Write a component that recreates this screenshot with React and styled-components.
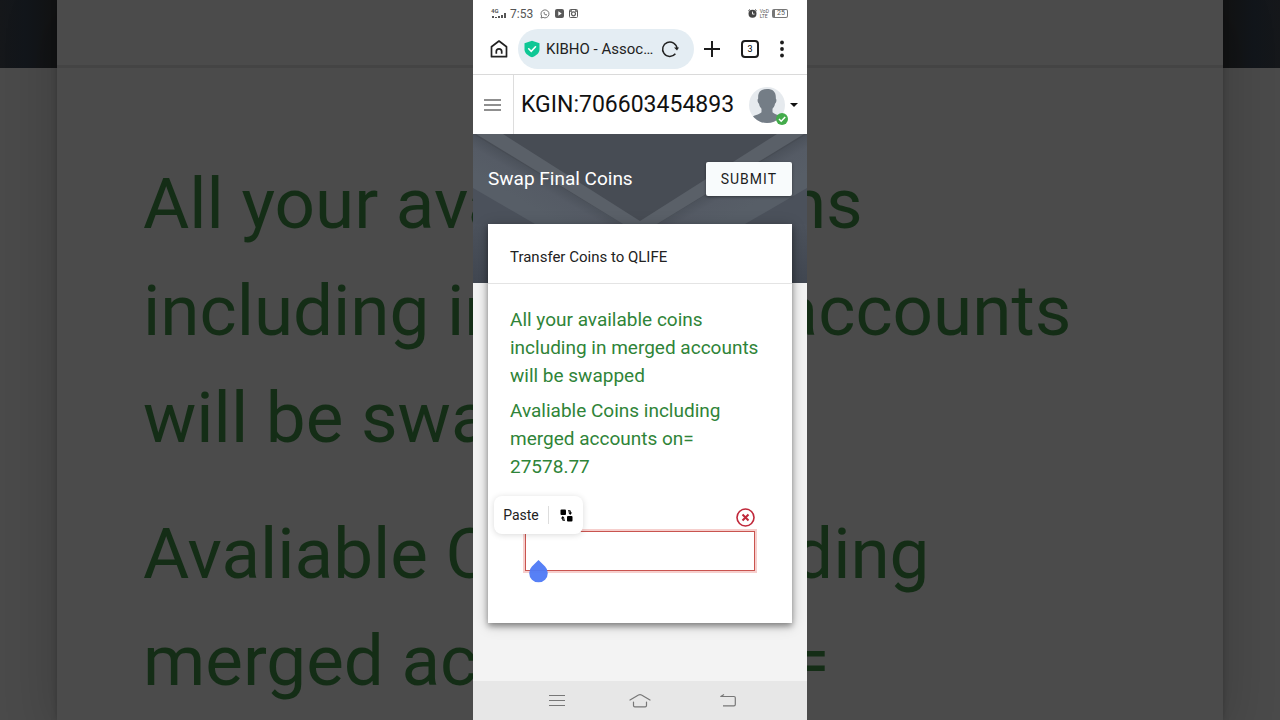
import React from "react";
import styled, { createGlobalStyle } from "styled-components";

const GlobalStyle = createGlobalStyle`
  * {
    box-sizing: border-box;
  }
  body {
    margin: 0;
    background: #4a4a4a;
    font-family: Roboto, "Liberation Sans", sans-serif;
  }
  h1, h2, p {
    margin: 0;
    font-weight: 400;
  }
  button {
    padding: 0;
    border: 0;
    background: none;
    color: inherit;
    font-family: inherit;
    cursor: pointer;
  }
  svg {
    display: block;
    flex: none;
  }
`;

const Notice = () => (
  <>
    <p>All your available coins including in merged accounts will be swapped</p>
    <p>Avaliable Coins including merged accounts on= 27578.77</p>
  </>
);

const StatusBar = () => (
  <Status>
    <Network>
      <Tiny>4G</Tiny>
      <svg width="16" height="6" viewBox="0 0 16 6" fill="#555">
        <path d="M1 3h2v2H1zM4 4h2v1H4zM7 3h2v2H7zM10 2h2v3h-2zM13 0h2v5h-2z" />
      </svg>
    </Network>
    <Clock>7:53</Clock>
    <svg width="10" height="10" viewBox="0 0 10 10" fill="none" stroke="#666">
      <path d="M1 9l.6-2A4 4 0 1 1 3.100 8.400z" strokeWidth=".9" />
      <path d="M3.500 3.200c0 1.800 1.500 3.300 3.200 3.300l.3-.9-1.100-.5-.5.4-1-1 .4-.6-.4-1z" fill="#666" stroke="none" />
    </svg>
    <svg width="9" height="9" viewBox="0 0 9 9">
      <rect width="9" height="9" rx="2" fill="#5a5a5a" />
      <path d="M3.300 2.300v4.400l3.400-2.200z" fill="#fff" />
    </svg>
    <svg width="9" height="9" viewBox="0 0 9 9" fill="none" stroke="#5a5a5a">
      <rect x=".5" y=".5" width="8" height="8" rx="1" />
      <path d="M1 2h2M6 2h2" strokeWidth="1.400" />
      <circle cx="4.500" cy="4.800" r="2" strokeWidth="1.200" />
    </svg>
    <StatusEnd>
      <svg width="9" height="9" viewBox="0 0 9 9">
        <circle cx="4.500" cy="4.800" r="4" fill="#444" />
        <path d="M.3 1.900L2 .5M8.700 1.900L7 .5" stroke="#444" strokeWidth="1" />
        <path d="M4.500 2.600v2.500h2" stroke="#fff" strokeWidth=".9" fill="none" />
      </svg>
      <Volte>
        <span>VoD</span>
        <span>LTE</span>
      </Volte>
      <Battery>25</Battery>
    </StatusEnd>
  </Status>
);

const BrowserBar = () => (
  <Browser>
    <IconButton aria-label="Home">
      <svg width="20" height="20" viewBox="0 0 20 20" fill="none" stroke="#222" strokeWidth="1.700" strokeLinejoin="round">
        <path d="M2.500 7.700L10 2l7.500 5.700v10h-15z" />
        <path d="M7.300 14.700v-2.200a2.700 2.700 0 0 1 5.400 0v2.200" />
      </svg>
    </IconButton>
    <AddressPill>
      <svg width="16" height="18" viewBox="0 0 16 18">
        <path d="M8 .8l7.500 2.500v6c0 4-3.500 6.500-7.500 8-4-1.500-7.500-4-7.500-8v-6z" fill="#0fc795" />
        <path d="M4.700 8.800L7.200 11.300 11.500 6.800" fill="none" stroke="#fff" strokeWidth="1.600" strokeLinecap="round" />
      </svg>
      <Address>KIBHO - Association</Address>
      <IconButton aria-label="Reload">
        <svg width="18" height="18" viewBox="0 0 18 18">
          <path d="M14.400 13.800A7.200 7.200 0 1 1 16 8.500" fill="none" stroke="#222" strokeWidth="1.500" />
          <path d="M13 7.500h5l-2 3z" fill="#222" />
        </svg>
      </IconButton>
    </AddressPill>
    <Tools>
      <IconButton aria-label="New tab">
        <svg width="18" height="18" viewBox="0 0 18 18" stroke="#1c1c1c" strokeWidth="2">
          <path d="M9 1v16M1 9h16" />
        </svg>
      </IconButton>
      <TabCount aria-label="Tabs">3</TabCount>
      <IconButton aria-label="More">
        <svg width="6" height="18" viewBox="0 0 6 18" fill="#1c1c1c">
          <circle cx="3" cy="2.500" r="1.900" />
          <circle cx="3" cy="9" r="1.900" />
          <circle cx="3" cy="15.500" r="1.900" />
        </svg>
      </IconButton>
    </Tools>
  </Browser>
);

const AccountBar = () => (
  <Account>
    <MenuButton aria-label="Menu">
      <svg width="17" height="12" viewBox="0 0 17 12" stroke="#6b6b6b" strokeWidth="1.500">
        <path d="M0 1h17M0 6h17M0 11h17" />
      </svg>
    </MenuButton>
    <AccountId>KGIN:706603454893</AccountId>
    <ProfileButton aria-label="Profile">
      <svg width="40" height="40" viewBox="0 0 40 40">
        <defs>
          <clipPath id="face">
            <circle cx="18" cy="20" r="18" />
          </clipPath>
        </defs>
        <circle cx="18" cy="20" r="18" fill="#e6eaee" />
        <path
          clipPath="url(#face)"
          fill="#747d86"
          d="M18 4c6 0 9.300 3 8.800 9.500 1 .5.800 4.500-.8 5.200-.4 2.600-1.500 3.800-2.500 5v3.600c2 2.500 8.500 3 10.500 5.500v8H2v-8c2-2.500 8.500-3 10.500-5.500v-3.600c-1-1.200-2.100-2.400-2.500-5-1.600-.7-1.800-4.700-.8-5.200C8.700 7 12 4 18 4z"
        />
        <circle cx="33" cy="34" r="6" fill="#43ab4b" />
        <path d="M30 34l2.200 2.200 4-4.200" fill="none" stroke="#fff" strokeWidth="1.500" />
      </svg>
      <svg width="8" height="4" viewBox="0 0 8 4">
        <path d="M0 0h8L4 4z" fill="#111" />
      </svg>
    </ProfileButton>
  </Account>
);

const HeroPattern = () => (
  <Pattern viewBox="0 0 334 149" preserveAspectRatio="none" aria-hidden="true">
    <defs>
      <linearGradient id="side" x1="0" y1="0" x2="0" y2="1">
        <stop offset="0" stopColor="#4c525c" />
        <stop offset="1" stopColor="#414751" />
      </linearGradient>
      <linearGradient id="foldLeft" gradientUnits="userSpaceOnUse" x1="75" y1="44" x2="58" y2="73">
        <stop offset="0" stopColor="#4b515a" />
        <stop offset="0.350" stopColor="#555b65" />
        <stop offset="1" stopColor="#575e67" />
      </linearGradient>
      <linearGradient id="foldRight" gradientUnits="userSpaceOnUse" x1="259" y1="44" x2="276" y2="73">
        <stop offset="0" stopColor="#4b515a" />
        <stop offset="0.350" stopColor="#555b65" />
        <stop offset="1" stopColor="#575e67" />
      </linearGradient>
    </defs>
    <rect width="334" height="149" fill="#474c54" />
    <path d="M0 0l150 90H0z" fill="url(#foldLeft)" />
    <path d="M334 0L184 90h150z" fill="url(#foldRight)" />
    <path d="M3 0h27l137 87 137-87h27L184 90h-34z" fill="#5a6068" />
    <path d="M0 54l62 36H0zM334 54l-62 36h62z" fill="#4b515b" />
    <path d="M0 90h334v59H0z" fill="url(#side)" />
  </Pattern>
);

const TransferCard = () => (
  <Card>
    <CardTitle>Transfer Coins to QLIFE</CardTitle>
    <CardBody>
      <NoticeText>
        <Notice />
      </NoticeText>
      <Field>
        <ClearButton aria-label="Clear">
          <svg width="20" height="20" viewBox="0 0 20 20" fill="none" stroke="#c0283a">
            <circle cx="10.500" cy="10.500" r="8.500" strokeWidth="1.600" />
            <path d="M7.500 7.500l6 6M13.500 7.500l-6 6" strokeWidth="2" />
          </svg>
        </ClearButton>
        <Amount type="text" aria-label="Coins" />
        <PasteMenu>
          <PasteButton>Paste</PasteButton>
          <MoreButton aria-label="More actions">
            <svg width="13" height="13" viewBox="0 0 13 13">
              <rect x=".5" y=".5" width="5.500" height="5.500" rx="1" />
              <rect x="7" y="7" width="5.500" height="5.500" rx="1" />
              <path d="M8 1.200h1.800q1 0 1 1v1.300h1.400L10.200 6 8.200 3.500h1.400V2.400H8zM5 11.800H3.200q-1 0-1-1V9.500H.8L2.800 7l2 2.500H3.400v1.100H5z" />
            </svg>
          </MoreButton>
        </PasteMenu>
        <CaretHandle width="20" height="24" viewBox="0 0 20 24">
          <path d="M10.500 1l6.600 6.500a9.300 9.300 0 1 1-13.200 0z" fill="#4e79f6" fillOpacity=".95" />
        </CaretHandle>
      </Field>
    </CardBody>
  </Card>
);

const App = () => {
  return (
    <Stage>
      <GlobalStyle />
      <Backdrop aria-hidden="true">
        <BackdropBand />
        <BackdropCard>
          <BackdropHead />
          <BackdropText>
            <Notice />
          </BackdropText>
        </BackdropCard>
      </Backdrop>
      <Phone>
        <StatusBar />
        <BrowserBar />
        <AccountBar />
        <Main>
          <Hero>
            <HeroPattern />
            <HeroTitle>Swap Final Coins</HeroTitle>
            <SubmitButton>SUBMIT</SubmitButton>
          </Hero>
          <TransferCard />
        </Main>
        <SystemNav>
          <IconButton aria-label="Recent apps">
            <svg width="16" height="14" viewBox="0 0 16 14" stroke="#777" strokeWidth="1.200">
              <path d="M0 1.500h16M0 6.500h16M0 11.500h16" />
            </svg>
          </IconButton>
          <IconButton aria-label="Home screen">
            <svg width="22" height="14" viewBox="0 0 22 14" fill="none" stroke="#777" strokeWidth="1.200" strokeLinecap="round" strokeLinejoin="round">
              <path d="M1 6L9.500 1q1.500-.7 3 0L21 6M4.500 8v3.500q0 1.300 1.300 1.300h10.400q1.300 0 1.300-1.300V8" />
            </svg>
          </IconButton>
          <IconButton aria-label="Back">
            <svg width="21" height="14" viewBox="-5 0 21 14" fill="none" stroke="#777" strokeWidth="1.200" strokeLinejoin="round">
              <path d="M4 .5L.8 2.500H14q1.300 0 1.300 1.300v6.700q0 1.300-1.300 1.300H3" />
            </svg>
          </IconButton>
        </SystemNav>
      </Phone>
    </Stage>
  );
};

const Stage = styled.div`
  display: grid;
  grid-template-columns: minmax(0, 1fr);
  grid-template-rows: minmax(0, 1fr);
  height: 100vh;
  overflow: hidden;
`;

/* enlarged, dimmed copy of the card that fills the space beside the phone */
const Backdrop = styled.div`
  grid-area: 1 / 1;
  display: grid;
  grid-template-rows: 68px minmax(0, 1fr);
  overflow: hidden;
  background: #4a4a4a;
`;

const BackdropBand = styled.div`
  grid-area: 1 / 1;
  background: linear-gradient(90deg, #15171a, #12161b 2%, #121314 4%, #121314 96%, #12161b 98%, #15171a);
`;

const BackdropCard = styled.div`
  grid-area: 1 / 1 / 3 / 2;
  margin: 0 57px;
  background: #4b4b4b;
  box-shadow: 0 0 6px rgba(0, 0, 0, 0.2), 0 10px 50px rgba(0, 0, 0, 0.2);
`;

const BackdropHead = styled.div`
  height: 68px;
  border-bottom: 3px solid #444;
`;

const BackdropText = styled.div`
  padding: 82px 86px 0;
  color: #142d16;
  font-size: 71px;
  line-height: 107px;

  p + p {
    margin-top: 29px;
  }
`;

const Phone = styled.div`
  grid-area: 1 / 1;
  justify-self: center;
  position: relative;
  display: flex;
  flex-direction: column;
  width: clamp(334px, 26vw, 480px);
  background: #fff;
`;

const Status = styled.div`
  display: flex;
  align-items: center;
  gap: 5px;
  height: 27px;
  padding: 0 19px 0 18px;
`;

const Network = styled.div`
  display: flex;
  flex-direction: column;
  width: 14px;
`;

const Tiny = styled.span`
  color: #555;
  font-size: 6px;
  font-weight: 700;
  line-height: 5px;
`;

const Clock = styled.span`
  margin-right: 2px;
  color: #555;
  font-size: 12px;
`;

const StatusEnd = styled.div`
  display: flex;
  align-items: center;
  gap: 3px;
  margin-left: auto;
`;

const Volte = styled.span`
  display: flex;
  flex-direction: column;
  color: #555;
  font-size: 5px;
  line-height: 5px;
`;

const Battery = styled.span`
  width: 16px;
  border: 1px solid #777;
  border-left-width: 3px;
  border-radius: 2px;
  color: #555;
  font-size: 7px;
  line-height: 7px;
  text-align: center;
`;

const Browser = styled.div`
  display: flex;
  align-items: center;
  gap: 9px;
  height: 48px;
  padding: 0 22px 4px 16px;
  border-bottom: 1px solid #dadada;
`;

const IconButton = styled.button`
  display: flex;
  align-items: center;
  justify-content: center;
`;

const AddressPill = styled.div`
  display: flex;
  flex: 1;
  align-items: center;
  gap: 6px;
  min-width: 0;
  height: 40px;
  padding: 0 15px 0 6px;
  border-radius: 20px;
  background: #e4edf3;
`;

const Address = styled.span`
  flex: 1;
  min-width: 0;
  overflow: hidden;
  color: #222;
  font-size: 15px;
  text-overflow: ellipsis;
  white-space: nowrap;
`;

const Tools = styled.div`
  display: flex;
  align-items: center;
  gap: 20px;
`;

const TabCount = styled.button`
  width: 18px;
  height: 18px;
  border: 2px solid #1c1c1c;
  border-radius: 4px;
  font-size: 9px;
  line-height: 14px;
`;

const Account = styled.header`
  display: flex;
  align-items: center;
  height: 59px;
`;

const MenuButton = styled.button`
  display: flex;
  align-items: center;
  justify-content: center;
  align-self: stretch;
  width: 41px;
  padding-right: 2px;
  border-right: 1px solid #ddd;
`;

const AccountId = styled.h1`
  flex: 1;
  padding-left: 7px;
  color: #111;
  font-size: 23px;
`;

const ProfileButton = styled.button`
  display: flex;
  align-items: center;
  gap: 1px;
  padding-right: 9px;
`;

const Main = styled.main`
  flex: 1;
  background: #f3f3f3;
`;

const Hero = styled.section`
  position: relative;
  display: flex;
  align-items: center;
  justify-content: space-between;
  height: 149px;
  padding: 0 15px 59px;
`;

const Pattern = styled.svg`
  position: absolute;
  inset: 0;
  width: 100%;
  height: 100%;
`;

const HeroTitle = styled.h2`
  position: relative;
  color: #fff;
  font-size: 19px;
  line-height: 24px;
`;

const SubmitButton = styled.button`
  position: relative;
  height: 34px;
  padding: 0 15px;
  border-radius: 2px;
  background: #f8fbfc;
  box-shadow: 0 1px 3px rgba(0, 0, 0, 0.4);
  color: #1d1d1d;
  font-size: 14px;
  letter-spacing: 1px;
`;

const Card = styled.section`
  position: relative;
  margin: -59px 15px 0;
  background: #fff;
  box-shadow: 0 3px 6px rgba(0, 0, 0, 0.4), 0 2px 14px rgba(0, 0, 0, 0.2);
`;

const CardTitle = styled.h2`
  padding: 8px 22px 0;
  border-bottom: 1px solid #e4e4e4;
  color: #222;
  font-size: 15px;
  line-height: 51px;
`;

const CardBody = styled.div`
  padding: 22px 22px 52px;
`;

const NoticeText = styled.div`
  color: #2f8438;
  font-size: 19px;
  line-height: 28px;

  p + p {
    margin-top: 7px;
  }
`;

const Field = styled.div`
  position: relative;
  display: flex;
  flex-direction: column;
  margin-top: 26px;
  padding: 0 15px;
`;

const ClearButton = styled.button`
  align-self: flex-end;
  margin-bottom: 4px;
`;

const Amount = styled.input`
  width: 100%;
  height: 40px;
  padding: 0 12px;
  border: 1px solid #c9544f;
  outline: 0;
  box-shadow: 0 0 0 2px #f6cfcd;
  font-family: inherit;
  font-size: 15px;
`;

const PasteMenu = styled.div`
  position: absolute;
  top: -11px;
  left: -16px;
  display: flex;
  align-items: center;
  width: 89px;
  height: 38px;
  border-radius: 8px;
  background: #fff;
  box-shadow: 0 1px 6px rgba(0, 0, 0, 0.15);
`;

const PasteButton = styled.button`
  flex: 1;
  height: 18px;
  border-right: 1px solid #ddd;
  color: #222;
  font-size: 14px;
`;

const MoreButton = styled.button`
  display: flex;
  justify-content: center;
  width: 34px;
`;

const CaretHandle = styled.svg`
  position: absolute;
  top: 52px;
  left: 18px;
`;

const SystemNav = styled.nav`
  display: flex;
  align-items: center;
  justify-content: space-between;
  height: 39px;
  padding: 0 71px 0 76px;
  background: #e7e7e7;
`;

export default App;
